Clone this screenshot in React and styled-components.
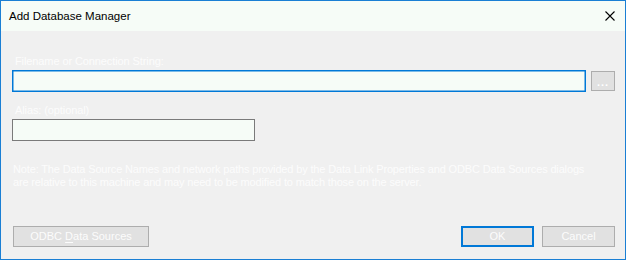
import styled, { createGlobalStyle } from 'styled-components';

const GlobalStyle = createGlobalStyle`
    html, body {
        margin: 0;
        padding: 0;
        background: #f0f0f0;
    }
    * {
        box-sizing: border-box;
    }
`;

const Window = styled.div`
    width: 626px;
    height: 260px;
    border: 1px solid #1a7fd4;
    background: #f0f0f0;
    display: flex;
    flex-direction: column;
    font-family: "Liberation Sans", Arial, sans-serif;
    font-size: 11px;
`;

const TitleBar = styled.div`
    height: 30px;
    background: #f6fcf7;
    display: flex;
    align-items: center;
    justify-content: space-between;
    padding: 0 10px 0 8px;
    color: #000;
    font-size: 11.5px;
`;

const CloseButton = styled.svg`
    width: 10px;
    height: 10px;
    display: block;
`;

const Body = styled.div`
    flex: 1;
    display: flex;
    flex-direction: column;
    padding: 23px 10px 12px 11px;
`;

const Label = styled.div`
    color: #fcfcfc;
    line-height: 14px;
    padding-left: 3px;
    margin-bottom: 2px;
    margin-top: ${p => p.$top || 0}px;
    letter-spacing: -0.1px;
`;

const FieldRow = styled.div`
    display: flex;
    align-items: center;
    gap: 5px;
`;

const TextBox = styled.div`
    height: 22px;
    width: ${p => p.$width ? `${p.$width}px` : 'auto'};
    flex: ${p => p.$width ? 'none' : 1};
    background: #f6fcf7;
    border: 1px solid ${p => p.$focused ? '#0078d7' : '#7a7a7a'};
    box-shadow: ${p => p.$focused ? 'inset 0 0 0 0.5px #0078d7' : 'none'};
`;

const Button = styled.div`
    height: ${p => p.$small ? 20 : 21}px;
    width: ${p => p.$width}px;
    background: #e1e1e1;
    border: ${p => p.$default ? '2px solid #0078d7' : '1px solid #adadad'};
    color: #fcfcfc;
    display: flex;
    align-items: center;
    justify-content: center;
    line-height: 1;
    margin-left: ${p => p.$ml || 0}px;
    u {
        text-decoration: underline;
        text-underline-offset: 2px;
    }
`;

const Dots = styled.span`
    color: #ffffff;
    font-weight: bold;
    letter-spacing: 1px;
    padding-top: 3px;
`;

const Note = styled.p`
    margin: 22px 0 0 1px;
    color: #fcfcfc;
    line-height: 13px;
    white-space: nowrap;
    letter-spacing: -0.15px;
`;

const Footer = styled.div`
    margin-top: auto;
    display: flex;
    align-items: center;
    gap: 8px;
`;

const Spacer = styled.div`
    flex: 1;
`;

const App = () => (
    <>
        <GlobalStyle />
        <Window>
            <TitleBar>
                <span>Add Database Manager</span>
                <CloseButton viewBox="0 0 10 10">
                    <path d="M0.5 0.5 L9.5 9.5 M9.5 0.5 L0.5 9.5" stroke="#000" strokeWidth="1.1" fill="none" />
                </CloseButton>
            </TitleBar>
            <Body>
                <Label>Filename or Connection String:</Label>
                <FieldRow>
                    <TextBox $focused />
                    <Button $small $width={24}><Dots>...</Dots></Button>
                </FieldRow>
                <Label $top={11}>Alias: (optional)</Label>
                <FieldRow>
                    <TextBox $width={243} />
                </FieldRow>
                <Note>
                    Note: The Data Source Names and network paths provided by the Data Link Properties and ODBC Data Sources dialogs
                    <br />
                    are relative to this machine and may need to be modified to match those on the server.
                </Note>
                <Footer>
                    <Button $width={136} $ml={1}>ODBC&nbsp;<u>D</u>ata Sources</Button>
                    <Spacer />
                    <Button $width={73} $default>OK</Button>
                    <Button $width={73}>Cancel</Button>
                </Footer>
            </Body>
        </Window>
    </>
);

export default App;
